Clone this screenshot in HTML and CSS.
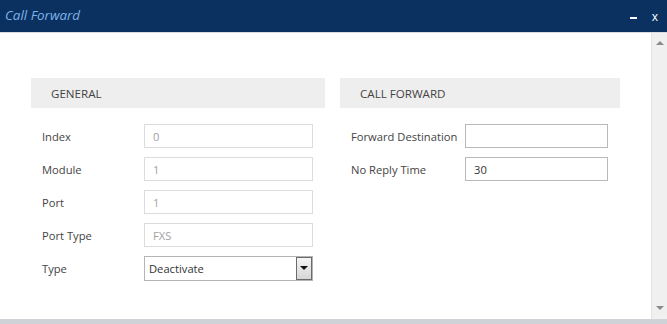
FILE: index.html
```html
<!DOCTYPE html>
<html lang="en">
<head>
  <meta charset="UTF-8" />
  <title>Call Forward</title>
  <link rel="stylesheet" href="styles.css">
</head>
<body>
  <div class="dialog">
    <div class="titlebar">
      <span class="title">Call Forward</span>
      <div class="controls">
        <span class="minimize"></span>
        <span class="close">x</span>
      </div>
    </div>

    <div class="dialog-body">
      <div class="content">
        <div class="group group-general">
          <div class="group-head">GENERAL</div>
          <div class="rows">
            <div class="row">
              <label>Index</label>
              <div class="field disabled">0</div>
            </div>
            <div class="row">
              <label>Module</label>
              <div class="field disabled">1</div>
            </div>
            <div class="row">
              <label>Port</label>
              <div class="field disabled">1</div>
            </div>
            <div class="row">
              <label>Port Type</label>
              <div class="field disabled">FXS</div>
            </div>
            <div class="row">
              <label>Type</label>
              <div class="field select">
                <span>Deactivate</span>
                <span class="select-btn"><span class="caret"></span></span>
              </div>
            </div>
          </div>
        </div>

        <div class="group group-forward">
          <div class="group-head">CALL FORWARD</div>
          <div class="rows">
            <div class="row">
              <label>Forward Destination</label>
              <div class="field editable"></div>
            </div>
            <div class="row">
              <label>No Reply Time</label>
              <div class="field editable">30</div>
            </div>
          </div>
        </div>
      </div>

      <div class="scrollbar">
        <span class="arrow up"></span>
        <span class="arrow down"></span>
      </div>
    </div>

    <div class="statusbar"></div>
  </div>
</body>
</html>
```

FILE: styles.css
```css
* {
  margin: 0;
  padding: 0;
  box-sizing: border-box;
}

body {
  font-family: 'Open Sans', 'Noto Sans', sans-serif;
  font-size: 11.2px;
  color: #444;
  background: #fff;
}

.dialog {
  width: 667px;
  height: 324px;
  display: flex;
  flex-direction: column;
}

.titlebar {
  height: 33px;
  background: #0a3160;
  border-bottom: 1px solid #d9dde2;
  display: flex;
  align-items: center;
  justify-content: space-between;
  padding: 0 9px 3px 5px;
}

.title {
  font-style: italic;
  font-size: 13.4px;
  color: #7fb3ea;
}

.controls {
  display: flex;
  align-items: center;
  gap: 15px;
  padding-top: 4px;
}

.minimize {
  width: 7px;
  height: 2px;
  background: #fff;
  margin-top: 3px;
}

.close {
  color: #fff;
  font-size: 12px;
  line-height: 1;
}

.dialog-body {
  flex: 1;
  display: flex;
}

.content {
  flex: 1;
  display: flex;
  align-items: flex-start;
  gap: 15px;
  padding: 45px 0 0 31px;
}

.group-general {
  width: 294px;
}

.group-forward {
  width: 280px;
}

.group-head {
  height: 30px;
  background: #eeeeee;
  color: #444;
  padding-left: 20px;
  display: flex;
  align-items: center;
  font-size: 11.6px;
}

.rows {
  display: flex;
  flex-direction: column;
  gap: 9px;
  padding: 16px 0 0 11px;
}

.row {
  display: flex;
  align-items: center;
  height: 24px;
}

.row label {
  width: 102px;
  flex-shrink: 0;
  white-space: nowrap;
}

.group-forward .row label {
  width: 114px;
}

.field {
  height: 24px;
  border: 1px solid #dcdcdc;
  padding: 0 8px;
  display: flex;
  align-items: center;
  width: 169px;
}

.group-forward .field {
  width: 143px;
  border-color: #b9b9b9;
}

.field.disabled {
  color: #a2a2a2;
}

.field.editable {
  color: #333;
}

.field.select {
  color: #333;
  border-color: #b4b4b4;
  justify-content: space-between;
  padding: 0 0 0 4px;
  height: 25px;
}

.select-btn {
  width: 16px;
  height: 23px;
  border: 1px solid #6b6b6b;
  background: linear-gradient(#f4f4f4, #d6d6d6);
  display: flex;
  align-items: center;
  justify-content: center;
}

.caret {
  width: 0;
  height: 0;
  border-left: 4px solid transparent;
  border-right: 4px solid transparent;
  border-top: 4px solid #111;
}

.scrollbar {
  width: 16px;
  background: #f0f0f0;
  border-left: 1px solid #e4e4e4;
  display: flex;
  flex-direction: column;
  justify-content: space-between;
  align-items: center;
  padding: 8px 0 9px;
}

.arrow {
  width: 0;
  height: 0;
  border-left: 4px solid transparent;
  border-right: 4px solid transparent;
}

.arrow.up {
  border-bottom: 4px solid #8a8a8a;
}

.arrow.down {
  border-top: 4px solid #8a8a8a;
}

.statusbar {
  height: 5px;
  background: #cfd3d8;
}
```
